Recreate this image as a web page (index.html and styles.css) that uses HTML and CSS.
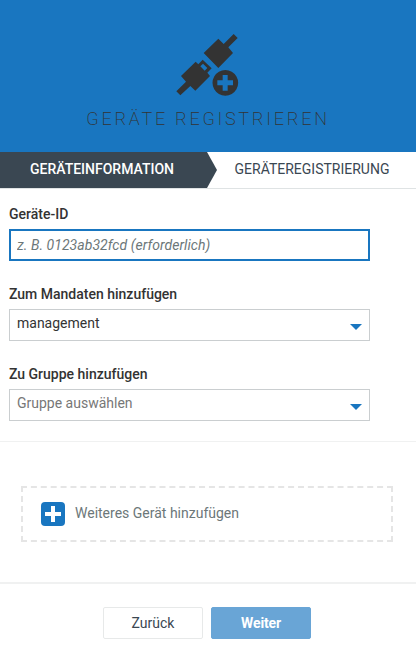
FILE: index.html
```html
<!DOCTYPE html>
<html lang="de">
<head>
<meta charset="utf-8">
<title>Geräte registrieren</title>
<link rel="stylesheet" href="styles.css">
</head>
<body>
<header class="hero">
  <svg class="hero-icon" viewBox="45 24 192 192" aria-hidden="true">
    <path d="M131 84L175 41L191 57L221 27L233 39L205 67L219 84L175 129Z"/>
    <path fill-rule="evenodd" d="M63 153L107 110L115 118L128 104L155 130L142 143L150 153L106 197L91 183L61 211L49 199L78 170ZM121 124L129 116L142 129L134 137Z"/>
    <path fill-rule="evenodd" d="M196 135a38.500 38.500 0 1 0 .01 0ZM188 150H203V166H219V181H203V197H188V181H172V166H188Z"/>
  </svg>
  <h1 class="hero-title">GERÄTE REGISTRIEREN</h1>
</header>
<nav class="steps">
  <div class="step step-active"><span>GERÄTEINFORMATION</span></div>
  <div class="step step-next"><span>GERÄTEREGISTRIERUNG</span></div>
</nav>
<main>
  <form class="fields">
    <div class="field">
      <label class="label" for="id"><span>Geräte-ID</span></label>
      <input class="control input" id="id" placeholder="z. B. 0123ab32fcd (erforderlich)">
    </div>
    <div class="field">
      <div class="label"><span>Zum Mandaten hinzufügen</span></div>
      <div class="control select"><span>management</span><i class="caret"></i></div>
    </div>
    <div class="field">
      <div class="label"><span>Zu Gruppe hinzufügen</span></div>
      <div class="control select empty"><span>Gruppe auswählen</span><i class="caret"></i></div>
    </div>
  </form>
  <div class="add">
    <svg class="add-icon" viewBox="0 0 24 24" aria-hidden="true"><rect width="24" height="24" rx="4" fill="#1976c0"/><path d="M12 4V20M4 12H20" stroke="#fff" stroke-width="4"/></svg>
    <span>Weiteres Gerät hinzufügen</span>
  </div>
</main>
<footer class="actions">
  <button class="button back">Zurück</button>
  <button class="button next">Weiter</button>
</footer>
</body>
</html>
```
FILE: styles.css
```css
* { box-sizing: border-box; }
body { margin: 0; background: #fff; color: #333; font: 14px/20px Roboto, sans-serif; }
.hero { height: 152px; padding-top: 33px; background: #1976c0; display: flex; flex-direction: column; align-items: center; }
.hero-icon { width: 64px; height: 64px; fill: #333; margin-right: 2px; }
.hero-title { margin: 11px 0 0; font-size: 18px; line-height: 22px; font-weight: 200; letter-spacing: 2.75px; color: #333; white-space: nowrap; }
.steps { display: flex; height: 37px; border-bottom: 1px solid #dfe3e4; font-size: 14px; }
.step { display: flex; justify-content: center; line-height: 34px; color: #3a4752; }
.step-active { width: 217px; padding-right: 13px; background: #3a4752; color: #fff; font-weight: 500; clip-path: polygon(0 0, 207px 0, 217px 50%, 207px 100%, 0 100%); }
.step-next { flex: 1; margin-left: -9px; }
.fields { height: 253px; padding: 15px 0 0 9px; border-bottom: 1px solid #f0f1f1; }
.field { height: 80px; }
.label { display: block; height: 25px; line-height: 20px; font-weight: 500; }
.control { display: flex; width: 361px; height: 32px; padding: 0 7px; border: 1px solid #caced0; font: inherit; color: #333; background: #fff; }
.input { border: 2px solid #1976c0; padding: 0 6px; outline: 0; }
.input::placeholder { color: #6c7779; opacity: 1; font-style: italic; letter-spacing: .05px; }
.select { justify-content: space-between; line-height: 27px; }
.select.empty { color: #777; }
.caret { width: 12px; height: 6px; margin-top: 14px; background: #1976c0; clip-path: polygon(0 0, 100% 0, 50% 100%); }
.add { display: flex; align-items: center; gap: 10px; width: 372px; height: 56px; margin: 44px 0 40px 21px; padding-left: 18px; border: 2px dashed #e5e5e5; color: #6c7779; }
.add-icon { width: 24px; height: 24px; }
.add span { padding-bottom: 2px; }
.actions { display: flex; justify-content: center; gap: 8px; padding: 23px 2px 0 0; border-top: 2px solid #f0f1f1; }
.button { width: 100px; height: 32px; padding: 0 0 1px; border: 1px solid #e7e9e9; border-radius: 2px; background: #fff; color: #3a4752; font: inherit; }
.next { border-color: #69a5d6; background: #69a5d6; color: #fff; font-weight: 700; letter-spacing: -.15px; }
```
